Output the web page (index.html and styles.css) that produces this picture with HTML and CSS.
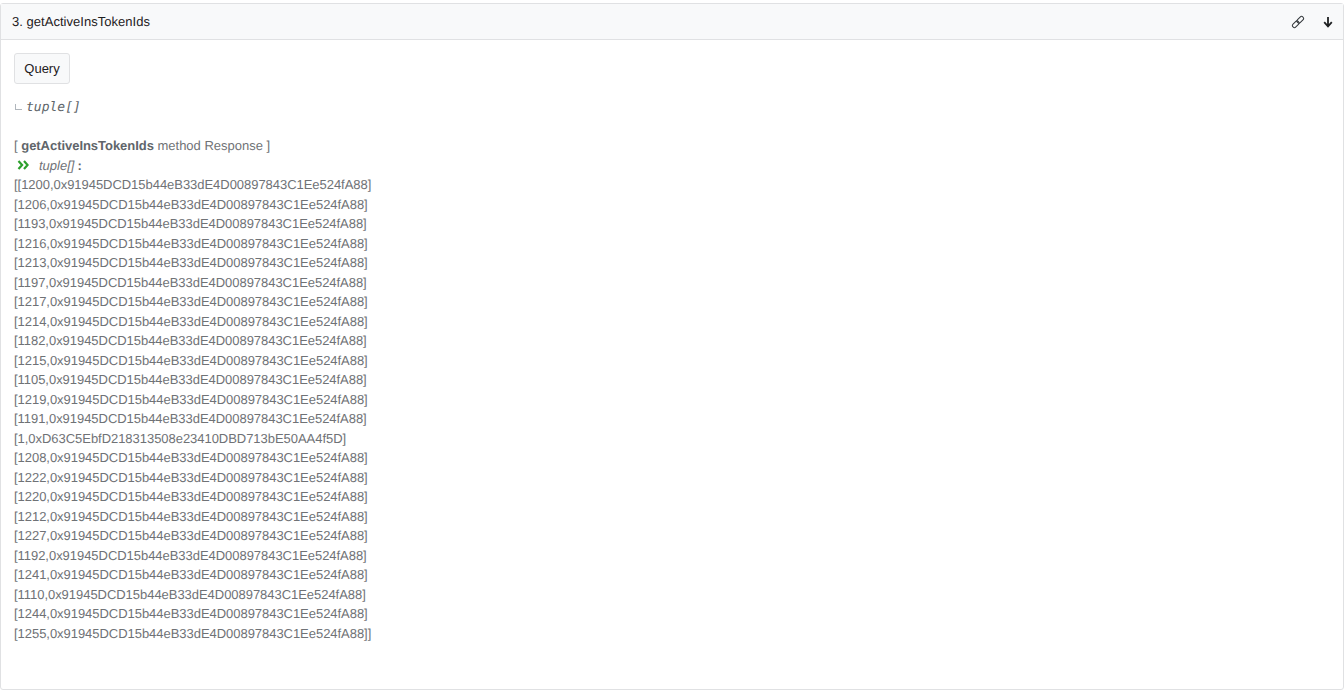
FILE: index.html
```html
<!DOCTYPE html>
<html lang="en">
<head>
<meta charset="utf-8">
<title>getActiveInsTokenIds</title>
<link rel="stylesheet" href="styles.css">
</head>
<body>
<section class="card">
  <header class="card-head">
    <span class="card-title">3. getActiveInsTokenIds</span>
    <div class="head-icons">
      <svg class="icon" width="14" height="14" viewBox="0 0 14 14" aria-hidden="true"><g fill="none" stroke="#33373b" stroke-width="1" transform="rotate(-45 7 7)"><rect x="0" y="5" width="7.6" height="4" rx="2"/><rect x="6.4" y="5" width="7.6" height="4" rx="2"/></g></svg>
      <svg class="icon" width="12" height="14" viewBox="0 0 12 14" aria-hidden="true"><path fill="none" stroke="#1e2022" stroke-width="1.8" d="M6 2v9.5M2.2 7.2L6 11.4l3.8-4.2"/></svg>
    </div>
  </header>
  <div class="card-body">
    <button class="query-btn" type="button">Query</button>
    <div class="output-type">
      <span class="corner"></span>
      <i class="mono">tuple[]</i>
    </div>
    <div class="response">
      <div class="line">[ <b>getActiveInsTokenIds</b> method Response ]</div>
      <div class="line type-line">
        <svg class="chevrons" width="12" height="10" viewBox="0 0 12 10" aria-hidden="true"><path fill="none" stroke="#2ca02c" stroke-width="2.2" d="M1.5 1l3.6 4-3.6 4M7 1l3.6 4L7 9"/></svg>
        <i class="type-name">tuple[]</i> <b class="colon">:</b>
      </div>
      <div class="rows">
        <div class="line">[[1200,0x91945DCD15b44eB33dE4D00897843C1Ee524fA88]</div>
        <div class="line">[1206,0x91945DCD15b44eB33dE4D00897843C1Ee524fA88]</div>
        <div class="line">[1193,0x91945DCD15b44eB33dE4D00897843C1Ee524fA88]</div>
        <div class="line">[1216,0x91945DCD15b44eB33dE4D00897843C1Ee524fA88]</div>
        <div class="line">[1213,0x91945DCD15b44eB33dE4D00897843C1Ee524fA88]</div>
        <div class="line">[1197,0x91945DCD15b44eB33dE4D00897843C1Ee524fA88]</div>
        <div class="line">[1217,0x91945DCD15b44eB33dE4D00897843C1Ee524fA88]</div>
        <div class="line">[1214,0x91945DCD15b44eB33dE4D00897843C1Ee524fA88]</div>
        <div class="line">[1182,0x91945DCD15b44eB33dE4D00897843C1Ee524fA88]</div>
        <div class="line">[1215,0x91945DCD15b44eB33dE4D00897843C1Ee524fA88]</div>
        <div class="line">[1105,0x91945DCD15b44eB33dE4D00897843C1Ee524fA88]</div>
        <div class="line">[1219,0x91945DCD15b44eB33dE4D00897843C1Ee524fA88]</div>
        <div class="line">[1191,0x91945DCD15b44eB33dE4D00897843C1Ee524fA88]</div>
        <div class="line">[1,0xD63C5EbfD218313508e23410DBD713bE50AA4f5D]</div>
        <div class="line">[1208,0x91945DCD15b44eB33dE4D00897843C1Ee524fA88]</div>
        <div class="line">[1222,0x91945DCD15b44eB33dE4D00897843C1Ee524fA88]</div>
        <div class="line">[1220,0x91945DCD15b44eB33dE4D00897843C1Ee524fA88]</div>
        <div class="line">[1212,0x91945DCD15b44eB33dE4D00897843C1Ee524fA88]</div>
        <div class="line">[1227,0x91945DCD15b44eB33dE4D00897843C1Ee524fA88]</div>
        <div class="line">[1192,0x91945DCD15b44eB33dE4D00897843C1Ee524fA88]</div>
        <div class="line">[1241,0x91945DCD15b44eB33dE4D00897843C1Ee524fA88]</div>
        <div class="line">[1110,0x91945DCD15b44eB33dE4D00897843C1Ee524fA88]</div>
        <div class="line">[1244,0x91945DCD15b44eB33dE4D00897843C1Ee524fA88]</div>
        <div class="line">[1255,0x91945DCD15b44eB33dE4D00897843C1Ee524fA88]]</div>
      </div>
    </div>
  </div>
</section>
</body>
</html>
```
FILE: styles.css
```css
* { box-sizing: border-box; }
html, body { margin: 0; padding: 0; background: #fff; }
body {
  font-family: "Liberation Sans", Arial, sans-serif;
  font-size: 13px;
  color: #6f7276;
  height: 692px;
  overflow: hidden;
  padding-top: 3px;
  text-rendering: geometricPrecision;
}
.card {
  height: 687px;
  border: 1px solid #e0e1e3;
  border-radius: 3px;
}
.card-head {
  height: 36px;
  background: #f8f9fa;
  border-bottom: 1px solid #e0e1e3;
  display: flex;
  align-items: center;
  justify-content: space-between;
  padding: 0 9px 0 11px;
}
.card-title { color: #1e2022; font-size: 13px; letter-spacing: 0.03px; }
.head-icons { display: flex; align-items: center; gap: 17px; }
.icon { display: block; }
.card-body { padding: 13px 13px 0; }
.query-btn {
  display: block;
  width: 56px;
  height: 31px;
  padding: 0;
  background: #f8f9fa;
  border: 1px solid #e0e1e3;
  border-radius: 3px;
  font: 13px "Liberation Sans", Arial, sans-serif;
  color: #1e2022;
}
.output-type {
  display: flex;
  align-items: center;
  height: 16px;
  margin-top: 15px;
  gap: 4px;
}
.corner {
  width: 7px;
  height: 6px;
  border-left: 1px solid #b0b6bc;
  border-bottom: 1px solid #b0b6bc;
  margin-left: 1px;
}
.mono { font-family: "DejaVu Sans Mono", monospace; font-size: 13px; color: #60656a; }
.response { margin-top: 21px; }
.rows { letter-spacing: -0.04px; }
.line { height: 19.5px; line-height: 19.5px; white-space: nowrap; }
.line b { color: #60656a; letter-spacing: -0.04px; }
.type-line { display: flex; align-items: center; }
.chevrons { margin-left: 3px; margin-right: 10px; }
.type-name { margin-right: 3px; }
```
